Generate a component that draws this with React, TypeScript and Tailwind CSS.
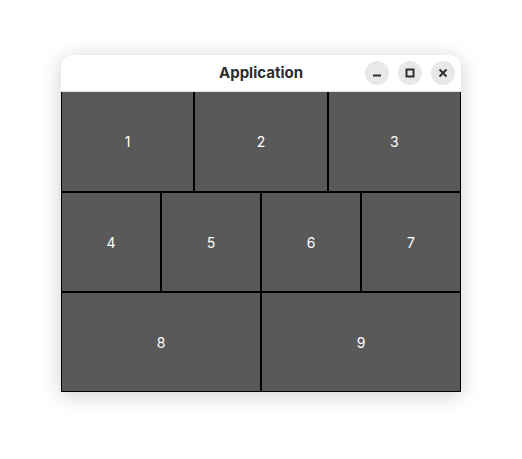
import React from "react";

function Cell({ n, w, top }: { n: number; w: string; top?: boolean }) {
  return (
    <div
      className={`${w} h-full flex items-center justify-center bg-[#595959] border border-black text-white text-[14px] ${top ? "border-t-0" : ""}`}
      style={{ fontFamily: "Inter, 'Noto Sans', sans-serif" }}
    >
      {n}
    </div>
  );
}

export default function App() {
  return (
    <div className="w-[522px] h-[459px] bg-white pt-[55px] pl-[61px]">
      <div className="w-[400px] rounded-t-[12px] bg-white shadow-[0_3px_20px_rgba(0,0,0,0.2)] overflow-hidden">
        <div className="relative h-[37px] flex items-center justify-center border-b border-[#dedede] bg-white">
          <span
            className="text-[15px] font-bold text-[#2e2e2e]"
            style={{ fontFamily: "Inter, 'Noto Sans', sans-serif" }}
          >
            Application
          </span>
          <div className="absolute right-[6px] top-0 h-full flex items-center gap-[9px]">
            <div className="w-[24px] h-[24px] rounded-full bg-[#e8e8e8] flex items-center justify-center">
              <svg width="12" height="12" viewBox="0 0 12 12">
                <rect x="2" y="7.5" width="8" height="2" fill="#2e2e2e" />
              </svg>
            </div>
            <div className="w-[24px] h-[24px] rounded-full bg-[#e8e8e8] flex items-center justify-center">
              <svg width="12" height="12" viewBox="0 0 12 12">
                <rect x="2.5" y="2.5" width="7" height="7" fill="none" stroke="#2e2e2e" strokeWidth="2" />
              </svg>
            </div>
            <div className="w-[24px] h-[24px] rounded-full bg-[#e8e8e8] flex items-center justify-center">
              <svg width="12" height="12" viewBox="0 0 12 12">
                <path d="M2.5 2.5 L9.5 9.5 M9.5 2.5 L2.5 9.5" stroke="#2e2e2e" strokeWidth="2" strokeLinecap="butt" />
              </svg>
            </div>
          </div>
        </div>
        <div className="flex flex-col h-[300px]">
          <div className="flex h-[100px]">
            <Cell n={1} w="w-1/3" top />
            <Cell n={2} w="w-1/3" top />
            <Cell n={3} w="w-1/3" top />
          </div>
          <div className="flex h-[100px]">
            <Cell n={4} w="w-1/4" />
            <Cell n={5} w="w-1/4" />
            <Cell n={6} w="w-1/4" />
            <Cell n={7} w="w-1/4" />
          </div>
          <div className="flex h-[100px]">
            <Cell n={8} w="w-1/2" />
            <Cell n={9} w="w-1/2" />
          </div>
        </div>
      </div>
    </div>
  );
}
